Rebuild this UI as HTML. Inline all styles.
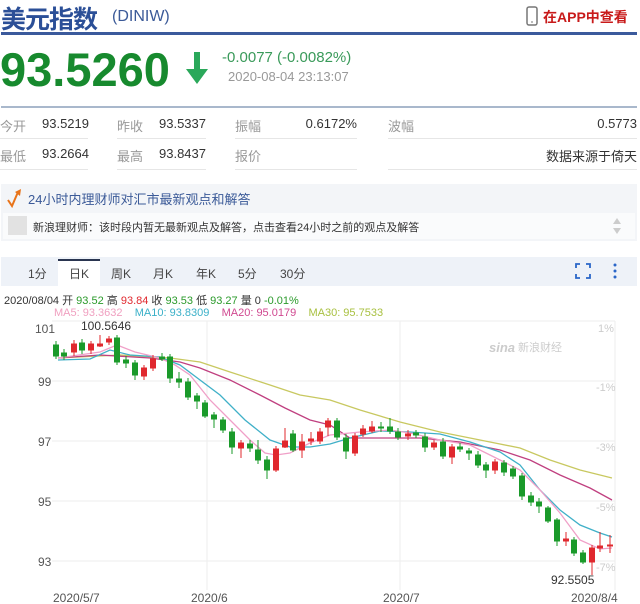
<!DOCTYPE html>
<html><head><meta charset="utf-8">
<style>
*{margin:0;padding:0;box-sizing:border-box}
body{width:640px;height:604px;background:#fff;font-family:"Liberation Sans","Noto Sans CJK SC",sans-serif;position:relative;overflow:hidden;color:#333}
.a{position:absolute;white-space:nowrap}
.lbl{color:#999;font-size:13px}
.val{font-size:13px;color:#333;text-align:right}
.ul{position:absolute;height:1px;background:#e6e6e6}
</style></head><body>
<div class="a" style="left:1px;top:0;font-size:25px;font-weight:bold;color:#2b4f97;letter-spacing:-1px">美元指数</div>
<div class="a" style="left:112px;top:8px;font-size:16px;color:#3b5a98">(DINIW)</div>
<svg class="a" style="left:526px;top:6px" width="12" height="20"><rect x="1" y="1" width="10" height="18" rx="2" fill="none" stroke="#777" stroke-width="1.5"/><line x1="5" y1="16" x2="7" y2="16" stroke="#777"/></svg>
<div class="a" style="left:543px;top:7px;font-size:14px;font-weight:bold;color:#c81a1a">在APP中查看</div>
<div class="a" style="left:1px;top:32px;width:636px;height:3px;background:#3b5a9c"></div>
<div class="a" style="left:0;top:42px;font-size:47px;font-weight:bold;color:#178a2e;letter-spacing:0">93.5260</div>
<svg class="a" style="left:184px;top:52px" width="26" height="34"><rect x="10" y="0" width="6" height="20" fill="#2aa85a"/><polygon points="2,17 24,17 13,32" fill="#2aa85a"/></svg>
<div class="a" style="left:222px;top:49px;font-size:15px;color:#3a9a5a">-0.0077 (-0.0082%)</div>
<div class="a" style="left:228px;top:69px;font-size:13px;color:#999">2020-08-04 23:13:07</div>
<div class="a" style="left:1px;top:106px;width:636px;height:2px;background:#a9b8cc"></div>
<div class="a lbl" style="left:0;top:116px">今开</div><div class="a val" style="left:40px;width:49px;top:116px">93.5219</div>
<div class="a lbl" style="left:117px;top:116px">昨收</div><div class="a val" style="left:150px;width:56px;top:116px">93.5337</div>
<div class="a lbl" style="left:235px;top:116px">振幅</div><div class="a val" style="left:300px;width:57px;top:116px">0.6172%</div>
<div class="a lbl" style="left:388px;top:116px">波幅</div><div class="a val" style="left:560px;width:77px;top:116px">0.5773</div>
<div class="ul" style="left:0;top:138px;width:88px"></div><div class="ul" style="left:117px;top:138px;width:89px"></div><div class="ul" style="left:235px;top:138px;width:122px"></div><div class="ul" style="left:388px;top:138px;width:249px"></div>
<div class="a lbl" style="left:0;top:146px">最低</div><div class="a val" style="left:40px;width:49px;top:146px">93.2664</div>
<div class="a lbl" style="left:117px;top:146px">最高</div><div class="a val" style="left:150px;width:56px;top:146px">93.8437</div>
<div class="a lbl" style="left:235px;top:146px">报价</div><div class="a val" style="left:480px;width:157px;top:146px">数据来源于倚天</div>
<div class="ul" style="left:0;top:169px;width:88px"></div><div class="ul" style="left:117px;top:169px;width:89px"></div><div class="ul" style="left:235px;top:169px;width:122px"></div><div class="ul" style="left:388px;top:169px;width:249px"></div>
<div class="a" style="left:1px;top:184px;width:636px;height:57px;background:#f3f5f8"></div>
<svg class="a" style="left:6px;top:188px" width="16" height="20"><polyline points="2,12 6,18 12,4" fill="none" stroke="#e8741a" stroke-width="2"/><polygon points="9,4 15,1 14,8" fill="#e8741a"/></svg>
<div class="a" style="left:28px;top:189px;font-size:13px;color:#3b5a98">24小时内理财师对汇市最新观点和解答</div>
<div class="a" style="left:3px;top:213px;width:632px;height:26px;background:#fafbfc"></div>
<div class="a" style="left:8px;top:216px;width:19px;height:19px;background:#e2e2e2"></div>
<div class="a" style="left:33px;top:219px;font-size:11px;color:#333">新浪理财师：该时段内暂无最新观点及解答，点击查看24小时之前的观点及解答</div>
<svg class="a" style="left:612px;top:217px" width="10" height="18"><polygon points="5,1 1,7 9,7" fill="#ccc"/><polygon points="5,17 1,11 9,11" fill="#ccc"/></svg>
<div class="a" style="left:1px;top:257px;width:636px;height:29px;background:#eef2f8"></div>
<div class="a" style="left:58px;top:259px;width:42px;height:27px;background:#fff;border-top:2px solid #2a3550"></div>
<div class="a" style="left:28px;top:265px;font-size:12px;color:#444">1分</div>
<div class="a" style="left:69px;top:265px;font-size:12px;color:#444">日K</div>
<div class="a" style="left:111px;top:265px;font-size:12px;color:#444">周K</div>
<div class="a" style="left:153px;top:265px;font-size:12px;color:#444">月K</div>
<div class="a" style="left:196px;top:265px;font-size:12px;color:#444">年K</div>
<div class="a" style="left:238px;top:265px;font-size:12px;color:#444">5分</div>
<div class="a" style="left:280px;top:265px;font-size:12px;color:#444">30分</div>
<svg class="a" style="left:575px;top:263px" width="50" height="16"><path d="M1 5V1H5M11 1H15V5M15 11V15H11M5 15H1V11" fill="none" stroke="#2a66c8" stroke-width="1.8"/><circle cx="40" cy="2" r="1.5" fill="#2a66c8"/><circle cx="40" cy="8" r="1.5" fill="#2a66c8"/><circle cx="40" cy="14" r="1.5" fill="#2a66c8"/></svg>
<div class="a" style="left:4px;top:292px;font-size:11px;color:#333">2020/08/04 开 <span style="color:#2a9a2a">93.52</span> 高 <span style="color:#e0282e">93.84</span> 收 <span style="color:#2a9a2a">93.53</span> 低 <span style="color:#2a9a2a">93.27</span> 量 0 <span style="color:#2a9a2a">-0.01%</span></div>
<div class="a" style="left:54px;top:307px;font-size:11px"><span style="color:#f0a0c0">MA5: 93.3632</span>&nbsp;&nbsp;&nbsp; <span style="color:#3ab0c8">MA10: 93.8309</span>&nbsp;&nbsp;&nbsp; <span style="color:#d04890">MA20: 95.0179</span>&nbsp;&nbsp;&nbsp; <span style="color:#a8c040">MA30: 95.7533</span></div>
<svg class="a" style="left:0;top:0" width="640" height="604">
<g stroke="#eee" stroke-width="1"><line x1="52" y1="321" x2="615" y2="321"/><line x1="52" y1="381" x2="615" y2="381"/><line x1="52" y1="441" x2="615" y2="441"/><line x1="52" y1="501" x2="615" y2="501"/><line x1="52" y1="561" x2="615" y2="561"/><line x1="207" y1="321" x2="207" y2="590"/><line x1="400" y1="321" x2="400" y2="590"/><line x1="615" y1="321" x2="615" y2="590"/></g>
<g font-size="12" fill="#555" font-family="Liberation Sans,sans-serif"><text x="35" y="333">101</text><text x="38" y="386">99</text><text x="38" y="446">97</text><text x="38" y="506">95</text><text x="38" y="566">93</text>
<text x="81" y="330" fill="#333">100.5646</text><text x="551" y="584" fill="#333">92.5505</text>
<text x="53" y="602">2020/5/7</text><text x="191" y="602">2020/6</text><text x="383" y="602">2020/7</text><text x="571" y="602">2020/8/4</text></g>
<g font-size="11" fill="#ccc" font-family="Liberation Sans,sans-serif"><text x="598" y="332">1%</text><text x="596" y="391">-1%</text><text x="596" y="451">-3%</text><text x="596" y="511">-5%</text><text x="596" y="571">-7%</text>
<text x="489" y="352" font-weight="bold" font-style="italic" font-size="13">sina</text><text x="518" y="351">新浪财经</text></g>
<g fill="none" stroke-width="1.3">
<polyline stroke="#c8c860" points="58,358 120,355 170,358 200,362 230,372 270,385 300,395 330,400 360,410 400,422 440,432 480,440 520,448 550,460 580,470 612,478"/>
<polyline stroke="#c04080" points="58,358 100,355 150,358 180,362 200,368 230,380 260,395 285,408 310,420 330,425 350,438 380,438 420,438 460,442 500,450 530,460 560,475 590,488 612,500"/>
<polyline stroke="#40b0c8" points="58,360 90,359 110,350 130,355 160,357 180,365 200,380 220,395 245,420 270,440 290,447 310,447 330,444 350,438 380,431 410,432 440,434 470,442 500,452 520,465 540,490 560,510 580,525 600,533 612,537"/>
<polyline stroke="#f0a0c8" points="58,358 100,352 117,345 135,352 160,358 175,365 190,375 210,400 230,420 250,440 265,453 276,455 290,453 310,443 330,435 360,432 390,430 410,433 440,440 470,445 500,460 520,470 540,490 560,513 580,540 600,549 612,548"/>
</g>
<g stroke-width="1">
<g stroke="#1a9a2a" fill="#1a9a2a">
<line x1="56" y1="341" x2="56" y2="359"/><rect x="53.5" y="345" width="5" height="11"/>
<line x1="64" y1="349" x2="64" y2="360"/><rect x="61.5" y="353" width="5" height="3"/>
<line x1="82" y1="339" x2="82" y2="354"/><rect x="79.5" y="343" width="5" height="7"/>
<line x1="117" y1="335" x2="117" y2="365"/><rect x="114.5" y="338" width="5" height="24"/>
<line x1="126" y1="356" x2="126" y2="368"/><rect x="123.5" y="360" width="5" height="3"/>
<line x1="135" y1="360" x2="135" y2="380"/><rect x="132.5" y="363" width="5" height="12"/>
<line x1="162" y1="353" x2="162" y2="361"/><rect x="159.5" y="357" width="5" height="2"/>
<line x1="170" y1="354" x2="170" y2="383"/><rect x="167.5" y="357" width="5" height="21"/>
<line x1="179" y1="372" x2="179" y2="388"/><rect x="176.5" y="379" width="5" height="3"/>
<line x1="188" y1="378" x2="188" y2="400"/><rect x="185.5" y="382" width="5" height="15"/>
<line x1="197" y1="393" x2="197" y2="409"/><rect x="194.5" y="396" width="5" height="5"/>
<line x1="205" y1="400" x2="205" y2="418"/><rect x="202.5" y="403" width="5" height="13"/>
<line x1="214" y1="412" x2="214" y2="428"/><rect x="211.5" y="415" width="5" height="4"/>
<line x1="223" y1="417" x2="223" y2="433"/><rect x="220.5" y="420" width="5" height="10"/>
<line x1="232" y1="428" x2="232" y2="454"/><rect x="229.5" y="432" width="5" height="15"/>
<line x1="250" y1="440" x2="250" y2="452"/><rect x="247.5" y="444" width="5" height="4"/>
<line x1="258" y1="440" x2="258" y2="464"/><rect x="255.5" y="450" width="5" height="10"/>
<line x1="267" y1="456" x2="267" y2="479"/><rect x="264.5" y="460" width="5" height="10"/>
<line x1="293" y1="430" x2="293" y2="452"/><rect x="290.5" y="434" width="5" height="16"/>
<line x1="337" y1="418" x2="337" y2="440"/><rect x="334.5" y="421" width="5" height="16"/>
<line x1="346" y1="434" x2="346" y2="459"/><rect x="343.5" y="438" width="5" height="13"/>
<line x1="381" y1="422" x2="381" y2="432"/><rect x="378.5" y="427" width="5" height="1"/>
<line x1="390" y1="418" x2="390" y2="434"/><rect x="387.5" y="427" width="5" height="4"/>
<line x1="398" y1="428" x2="398" y2="440"/><rect x="395.5" y="432" width="5" height="5"/>
<line x1="416" y1="430" x2="416" y2="438"/><rect x="413.5" y="433" width="5" height="2"/>
<line x1="425" y1="433" x2="425" y2="452"/><rect x="422.5" y="437" width="5" height="10"/>
<line x1="443" y1="438" x2="443" y2="459"/><rect x="440.5" y="442" width="5" height="14"/>
<line x1="460" y1="443" x2="460" y2="452"/><rect x="457.5" y="447" width="5" height="2"/>
<line x1="469" y1="448" x2="469" y2="460"/><rect x="466.5" y="451" width="5" height="2"/>
<line x1="478" y1="451" x2="478" y2="468"/><rect x="475.5" y="455" width="5" height="10"/>
<line x1="486" y1="462" x2="486" y2="478"/><rect x="483.5" y="465" width="5" height="5"/>
<line x1="504" y1="460" x2="504" y2="476"/><rect x="501.5" y="463" width="5" height="9"/>
<line x1="513" y1="466" x2="513" y2="479"/><rect x="510.5" y="469" width="5" height="7"/>
<line x1="522" y1="473" x2="522" y2="500"/><rect x="519.5" y="476" width="5" height="20"/>
<line x1="531" y1="492" x2="531" y2="506"/><rect x="528.5" y="496" width="5" height="6"/>
<line x1="539" y1="498" x2="539" y2="513"/><rect x="536.5" y="502" width="5" height="4"/>
<line x1="548" y1="506" x2="548" y2="523"/><rect x="545.5" y="508" width="5" height="13"/>
<line x1="557" y1="518" x2="557" y2="546"/><rect x="554.5" y="520" width="5" height="21"/>
<line x1="574" y1="537" x2="574" y2="556"/><rect x="571.5" y="540" width="5" height="13"/>
<line x1="583" y1="550" x2="583" y2="564"/><rect x="580.5" y="553" width="5" height="9"/>
</g>
<g stroke="#e0282e" fill="#e0282e">
<line x1="74" y1="340" x2="74" y2="356"/><rect x="71.5" y="344" width="5" height="8"/>
<line x1="91" y1="341" x2="91" y2="354"/><rect x="88.5" y="344" width="5" height="6"/>
<line x1="100" y1="335" x2="100" y2="347"/><rect x="97.5" y="344" width="5" height="2"/>
<line x1="109" y1="336" x2="109" y2="345"/><rect x="106.5" y="339" width="5" height="3"/>
<line x1="144" y1="365" x2="144" y2="380"/><rect x="141.5" y="368" width="5" height="8"/>
<line x1="153" y1="355" x2="153" y2="371"/><rect x="150.5" y="359" width="5" height="9"/>
<line x1="241" y1="440" x2="241" y2="458"/><rect x="238.5" y="443" width="5" height="5"/>
<line x1="276" y1="446" x2="276" y2="472"/><rect x="273.5" y="449" width="5" height="21"/>
<line x1="285" y1="428" x2="285" y2="448"/><rect x="282.5" y="441" width="5" height="6"/>
<line x1="302" y1="434" x2="302" y2="458"/><rect x="299.5" y="442" width="5" height="8"/>
<line x1="311" y1="432" x2="311" y2="445"/><rect x="308.5" y="439" width="5" height="2"/>
<line x1="320" y1="428" x2="320" y2="444"/><rect x="317.5" y="432" width="5" height="9"/>
<line x1="328" y1="418" x2="328" y2="436"/><rect x="325.5" y="421" width="5" height="6"/>
<line x1="355" y1="433" x2="355" y2="456"/><rect x="352.5" y="436" width="5" height="17"/>
<line x1="363" y1="425" x2="363" y2="437"/><rect x="360.5" y="429" width="5" height="5"/>
<line x1="372" y1="421" x2="372" y2="433"/><rect x="369.5" y="427" width="5" height="4"/>
<line x1="408" y1="430" x2="408" y2="440"/><rect x="405.5" y="434" width="5" height="2"/>
<line x1="434" y1="440" x2="434" y2="450"/><rect x="431.5" y="443" width="5" height="4"/>
<line x1="452" y1="444" x2="452" y2="464"/><rect x="449.5" y="447" width="5" height="10"/>
<line x1="495" y1="459" x2="495" y2="474"/><rect x="492.5" y="462" width="5" height="8"/>
<line x1="566" y1="532" x2="566" y2="546"/><rect x="563.5" y="539" width="5" height="2"/>
<line x1="592" y1="545" x2="592" y2="575"/><rect x="589.5" y="548" width="5" height="14"/>
<line x1="600" y1="532" x2="600" y2="552"/><rect x="597.5" y="546" width="5" height="2"/>
<line x1="610" y1="535" x2="610" y2="553"/><rect x="607.5" y="545" width="5" height="1"/>
</g></g>
</svg>
</body></html>
